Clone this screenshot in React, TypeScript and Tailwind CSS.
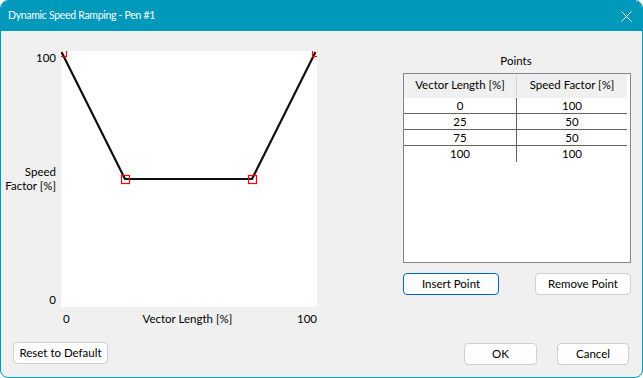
const points = [
  { len: 0, speed: 100 },
  { len: 25, speed: 50 },
  { len: 75, speed: 50 },
  { len: 100, speed: 100 },
];

const px = (v: number) => 0.5 + v * 2.54;
const py = (v: number) => 255 - v * 2.54;

function Chart() {
  const coords = points.map((p) => [px(p.len), py(p.speed)]);
  return (
    <svg width="256" height="256" viewBox="0 0 256 256" className="block bg-white overflow-hidden">
      <polyline
        points={coords.map((c) => c.join(",")).join(" ")}
        fill="none"
        stroke="#111"
        strokeWidth="2.2"
        strokeLinejoin="round"
      />
      {coords.map(([x, y], i) => (
        <rect
          key={i}
          x={Math.round(x) - 3.5}
          y={Math.round(y) - 3.5}
          width="8"
          height="8"
          fill="none"
          stroke="#ff0000"
          strokeWidth="1.2"
        />
      ))}
    </svg>
  );
}

function Button({ children, className = "" }: { children: React.ReactNode; className?: string }) {
  return (
    <button
      className={
        "h-[22px] rounded-[4px] border bg-[#fdfdfd] text-[11.5px] text-black leading-none " +
        className
      }
    >
      {children}
    </button>
  );
}

export default function App() {
  return (
    <div
      className="w-[643px] h-[378px] bg-white text-[11.5px] text-black"
      style={{ fontFamily: "Lato, 'Noto Sans', sans-serif" }}
    >
      <div className="w-full h-full flex flex-col rounded-[8px] border border-[#0099bc] bg-[#f0f0f0] overflow-hidden">
        {/* title bar */}
        <div className="h-[30px] shrink-0 bg-[#0099bc] flex items-center justify-between pl-[7px] pr-[10px] text-white">
          <span className="text-[10.5px] tracking-[-0.3px]">Dynamic Speed Ramping - Pen #1</span>
          <svg width="11" height="11" viewBox="0 0 11 11">
            <path d="M0.5 0.5 L10.5 10.5 M10.5 0.5 L0.5 10.5" stroke="#fff" strokeWidth="1" />
          </svg>
        </div>

        {/* body */}
        <div className="flex flex-1 pt-[20px]">
          {/* left: chart */}
          <div className="flex flex-col pl-[12px]">
            <div className="flex gap-[5px]">
              <div className="w-[43px] h-[256px] flex flex-col justify-between items-end text-right leading-[14px] whitespace-nowrap">
                <span>100</span>
                <span>
                  Speed
                  <br />
                  Factor [%]
                </span>
                <span>0</span>
              </div>
              <Chart />
            </div>
            <div className="ml-[48px] w-[256px] mt-[5px] flex justify-between leading-[14px]">
              <span className="pl-[2px]">0</span>
              <span className="pl-[8px]">Vector Length [%]</span>
              <span>100</span>
            </div>
            <Button className="mt-[16px] w-[95px] border-[#d0d0d0]">Reset to Default</Button>
          </div>

          {/* right: points */}
          <div className="ml-[86px] w-[228px] flex flex-col">
            <div className="text-center leading-[14px] pt-[3px] pr-[2px]">Points</div>
            <div className="mt-[5px] h-[190px] border border-[#828790] bg-white">
              <div className="flex h-[24px] bg-[#f0f0f0] w-[223px]">
                <div className="w-[113px] text-center pt-[1px] border-r border-[#d5d5d5] my-[1px]">Vector Length [%]</div>
                <div className="w-[110px] text-center pt-[2px]">Speed Factor [%]</div>
              </div>
              {points.map((p, i) => (
                <div
                  key={i}
                  className={
                    "flex h-[16px] w-[223px] leading-[16px] " +
                    (i < points.length - 1 ? "border-b border-[#646464]" : "")
                  }
                >
                  <div className="w-[113px] text-center border-r border-[#646464]">{p.len}</div>
                  <div className="w-[110px] text-center">{p.speed}</div>
                </div>
              ))}
            </div>
            <div className="mt-[10px] flex justify-between">
              <Button className="w-[96px] border-[#0067c0]">Insert Point</Button>
              <Button className="w-[96px] border-[#d0d0d0]">Remove Point</Button>
            </div>
            <div className="mt-[48px] flex justify-end gap-[20px] pr-[2px]">
              <Button className="w-[73px] border-[#d0d0d0]">OK</Button>
              <Button className="w-[72px] border-[#d0d0d0]">Cancel</Button>
            </div>
          </div>
        </div>
      </div>
    </div>
  );
}
